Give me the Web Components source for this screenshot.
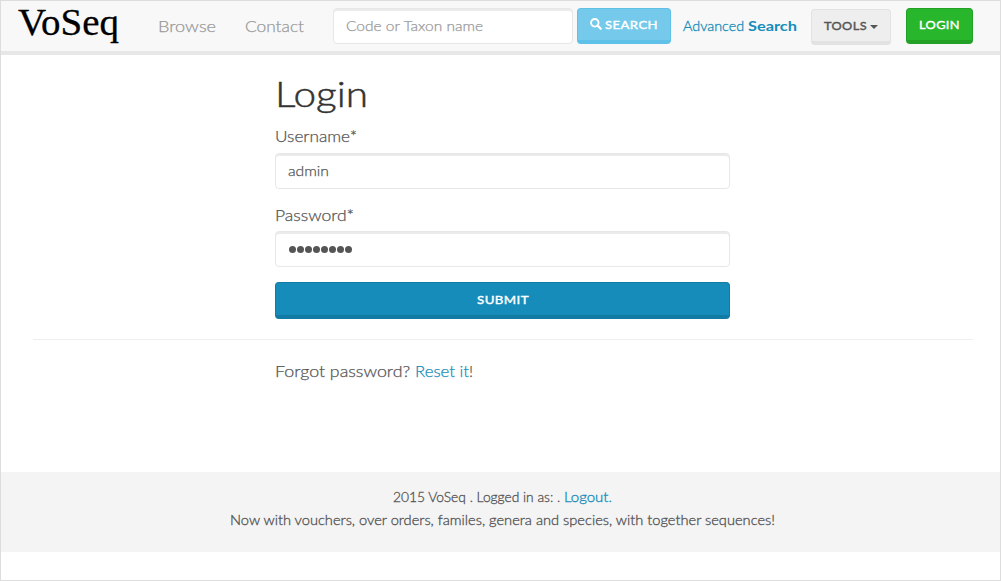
<!DOCTYPE html>
<html lang="en">
<head>
<meta charset="utf-8">
<title>VoSeq</title>
<style>
html,body{margin:0;height:100%;background:#fff}
body{font-family:Lato,"Open Sans",sans-serif;color:#555}
</style>
</head>
<body>
<voseq-page></voseq-page>
<script>
// A run of text widened or narrowed to a fixed measure.
class FitText extends HTMLElement {
  connectedCallback() {
    const root = this.attachShadow({mode:'open'});
    root.innerHTML = `<style>:host{display:inline-block;white-space:pre}span{display:inline-block;transform-origin:0 50%}</style><span><slot></slot></span>`;
    const want = parseFloat(this.getAttribute('w'));
    const span = root.querySelector('span');
    const have = span.getBoundingClientRect().width;
    if (have) span.style.transform = `scaleX(${want / have})`;
    this.style.width = want + 'px';
  }
}
class VsButton extends HTMLElement {
  constructor() {
    super();
    this.attachShadow({mode:'open'}).innerHTML = `<style>
      :host{display:block;flex:none;height:36px}
      button{all:unset;box-sizing:border-box;width:100%;height:100%;display:flex;align-items:center;justify-content:center;
        border:1px solid var(--edge);border-bottom-width:4px;border-radius:4px;background:var(--fill);color:var(--ink,#fff);
        font-size:12px;font-weight:400;-webkit-text-stroke:.4px currentColor;letter-spacing:.4px;line-height:17px}
    </style><button><slot></slot></button>`;
  }
}
class VsInput extends HTMLElement {
  constructor() {
    super();
    this.attachShadow({mode:'open'}).innerHTML = `<style>
      :host{display:block;flex:none;height:36px}
      div{box-sizing:border-box;height:100%;border:1px solid #e7e7e7;border-radius:4px;background:#fff;
        box-shadow:inset 0 2px 0 #ebebeb;padding:7px 12px 0;font-size:14px;font-weight:300;-webkit-text-stroke:.25px currentColor;line-height:20px;color:var(--ink,#555)}
    </style><div><slot></slot></div>`;
  }
}
class VsNavbar extends HTMLElement {
  connectedCallback() {
    this.attachShadow({mode:'open'}).innerHTML = `<style>
      :host{display:flex;box-sizing:border-box;height:54px;background:#f8f8f8;border-bottom:4px solid #e7e7e7;padding:7px 0 0 17px;align-items:flex-start}
      .logo{font:37.5px/42px "Liberation Serif",serif;color:#000;-webkit-text-stroke:.3px #000;width:140px;margin-top:-6px}
      .link{font-size:16px;font-weight:300;-webkit-text-stroke:.25px currentColor;line-height:24px;color:#999;margin-top:6px}
      .browse{width:87px}.contact{width:88px}
      vs-input{width:240px;--ink:#999}
      .search{width:94px;margin-left:4px;--fill:#75caeb;--edge:#5fc1e8}
      svg{display:block;flex:none}
      .search svg{margin:-2px 3px 0 0}
      .adv{display:flex;width:128px;margin:8px 0 0 12px;font-size:13.3px;font-weight:300;-webkit-text-stroke:.3px currentColor;line-height:20px;color:#158cba}
      .adv b{font-weight:700;-webkit-text-stroke:0}
      .tools{width:80px;margin-top:1px;--fill:#eee;--edge:#e2e2e2;--ink:#555}
      .tools svg{margin:2px 0 0 3px}
      .login{width:67px;margin-left:15px;--fill:#28b62c;--edge:#23a127}
    </style>
    <div class="logo"><fit-text w="101">VoSeq</fit-text></div>
    <div class="link browse"><fit-text w="58">Browse</fit-text></div>
    <div class="link contact"><fit-text w="59">Contact</fit-text></div>
    <vs-input><fit-text w="137">Code or Taxon name</fit-text></vs-input>
    <vs-button class="search"><svg width="12" height="12" viewBox="0 0 12 12"><circle cx="4.8" cy="4.8" r="3.8" fill="none" stroke="#fff" stroke-width="1.8"/><path d="M7.6 7.6l3.2 3.2" stroke="#fff" stroke-width="2.2" stroke-linecap="round"/></svg><fit-text w="53">SEARCH</fit-text></vs-button>
    <div class="adv"><fit-text w="65">Advanced </fit-text><b><fit-text w="49">Search</fit-text></b></div>
    <vs-button class="tools"><fit-text w="43">TOOLS</fit-text><svg width="8" height="4" viewBox="0 0 8 4"><path d="M0 0h8L4 4z" fill="#555"/></svg></vs-button>
    <vs-button class="login"><fit-text w="41">LOGIN</fit-text></vs-button>`;
  }
}
class VsLogin extends HTMLElement {
  connectedCallback() {
    this.attachShadow({mode:'open'}).innerHTML = `<style>
      :host{display:block;height:417px;box-sizing:border-box;padding:18px 27px 0 32px;font-weight:300;-webkit-text-stroke:.25px currentColor}
      .col{margin-left:242px;width:455px}
      h1{font-size:36px;font-weight:300;-webkit-text-stroke:.5px currentColor;line-height:40px;margin:0;color:#333;height:51px}
      label{display:block;font-size:16px;line-height:24px;height:29px}
      .second{margin-top:14px;height:28px}
      .dots{display:flex;padding:7px 0 0 1px}
      .dots i{width:7px;height:7px;border-radius:50%;background:#555;margin-right:1px}
      vs-button{margin-top:15px;height:37px;--fill:#158cba;--edge:#127ba3}
      hr{border:0;border-top:1px solid #eee;margin:20px 0 19px}
      p{display:flex;margin:0;font-size:16px;line-height:24px}
      a{color:#158cba}
    </style>
    <div class="col"><h1><fit-text w="93">Login</fit-text></h1>
      <label><fit-text w="82">Username*</fit-text></label>
      <vs-input><fit-text w="41">admin</fit-text></vs-input>
      <label class="second"><fit-text w="79">Password*</fit-text></label>
      <vs-input><span class="dots"><i></i><i></i><i></i><i></i><i></i><i></i><i></i><i></i></span></vs-input>
      <vs-button><fit-text w="52">SUBMIT</fit-text></vs-button></div>
    <hr>
    <p class="col"><fit-text w="140">Forgot password? </fit-text><a><fit-text w="54">Reset it</fit-text></a><span>!</span></p>`;
  }
}
class VsFooter extends HTMLElement {
  connectedCallback() {
    this.attachShadow({mode:'open'}).innerHTML = `<style>
      :host{display:flex;flex-direction:column;align-items:center;box-sizing:border-box;height:80px;background:#f4f4f4;padding:14px 0 0 4px;font-size:13px;font-weight:300;-webkit-text-stroke:.3px currentColor;line-height:23px}
      div{display:flex}a{color:#158cba}
    </style>
    <div><fit-text w="171">2015 VoSeq . Logged in as: . </fit-text><a><fit-text w="48">Logout.</fit-text></a></div>
    <div><fit-text w="545">Now with vouchers, over orders, familes, genera and species, with together sequences!</fit-text></div>`;
  }
}
class VoseqPage extends HTMLElement {
  connectedCallback() {
    this.attachShadow({mode:'open'}).innerHTML = `<style>
      :host{display:block;box-sizing:border-box;width:1001px;height:581px;border:1px solid #ddd;overflow:hidden}
    </style><vs-navbar></vs-navbar><vs-login></vs-login><vs-footer></vs-footer>`;
  }
}
customElements.define('fit-text', FitText);
customElements.define('vs-button', VsButton);
customElements.define('vs-input', VsInput);
customElements.define('vs-navbar', VsNavbar);
customElements.define('vs-login', VsLogin);
customElements.define('vs-footer', VsFooter);
customElements.define('voseq-page', VoseqPage);
</script>
</body>
</html>
